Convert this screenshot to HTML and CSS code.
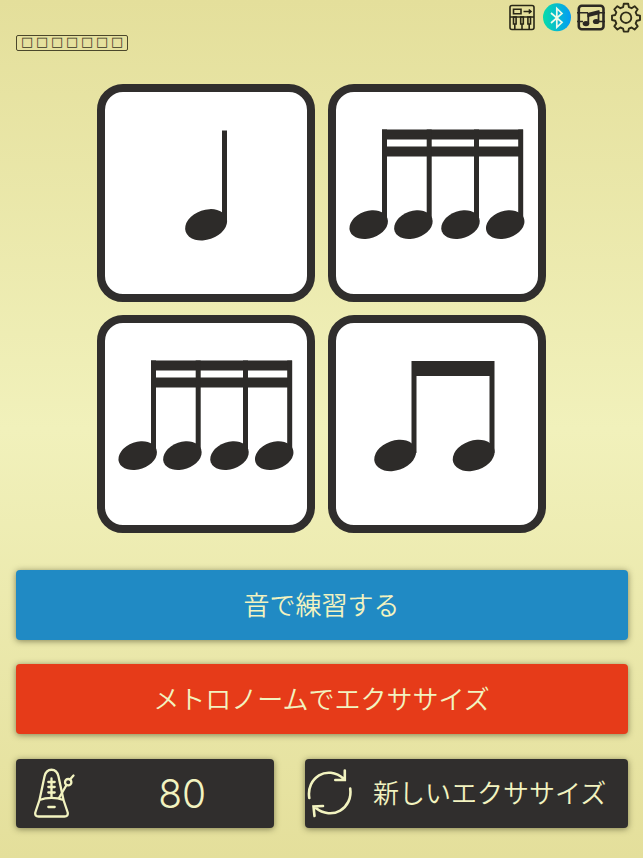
FILE: index.html
```html
<!DOCTYPE html>
<html lang="ja">
<head>
  <meta charset="utf-8">
  <title>リズム</title>
  <link rel="stylesheet" href="styles.css">
</head>
<body>
  <svg width="0" height="0" class="defs">
    <defs>
      <ellipse id="head" rx="19.8" ry="13.6" transform="rotate(-19)"/>
      <g id="sixteenths">
        <path d="M46 37.500h141v10H46zM46 54.500h141v10H46z"/>
        <path d="M46 37.500h5V130h-5zM90.700 37.500h5V130h-5zM138 37.500h5V130h-5zM182.200 37.500h5V130h-5z"/>
        <use href="#head" x="32.700" y="132.700"/>
        <use href="#head" x="77.400" y="132.700"/>
        <use href="#head" x="124.500" y="132.700"/>
        <use href="#head" x="169.200" y="132.700"/>
      </g>
    </defs>
  </svg>
  <header>
    <div class="badge">□□□□□□□</div>
    <nav>
      <svg class="icon" viewBox="0 0 28 28" fill="none" stroke="#292716" stroke-width="1.600">
        <rect x="2" y="2.500" width="24" height="24" rx="2"/>
        <path d="M2 14h24M5.500 6.200h7.500v4.600H5.500zM15.500 8.500H23M20.800 6.500l2.200 2-2.200 2M6.800 21v5M14 21v5M21.200 21v5"/>
        <path d="M5.500 14h2.600v7H5.500zM12.700 14h2.600v7h-2.600zM19.900 14h2.600v7h-2.600z"/>
      </svg>
      <svg class="icon" viewBox="0 0 28 28" fill="none">
        <linearGradient id="bt"><stop offset="0" stop-color="#08dca9"/><stop offset="1" stop-color="#049cf4"/></linearGradient>
        <circle cx="14" cy="14.300" r="14" fill="url(#bt)"/>
        <path d="M8 10l11 9.300-5.200 5V5.500l5.200 5L8 20" stroke="#eefbe8" stroke-width="1.700"/>
      </svg>
      <svg class="icon" viewBox="0 0 28 28" fill="none" stroke="#2b2823">
        <rect x="1.800" y="2.800" width="24.700" height="23.500" rx="3" stroke-width="2.600"/>
        <path d="M0 9.800h11M22 9.800h6M0 18.500h6M22 18.500h6" stroke-width="1.400"/>
        <path d="M11.300 20.500V10M21.500 18V8" stroke-width="1.800"/>
        <g fill="#2b2823" stroke="none">
          <path d="M10.400 10l12-3v4.200l-12 3z"/>
          <ellipse cx="9" cy="20.600" rx="3.300" ry="2.600"/>
          <ellipse cx="19.200" cy="18.500" rx="3.300" ry="2.600"/>
        </g>
      </svg>
      <svg class="icon" viewBox="0 0 28 28" fill="none" stroke="#302d19" stroke-width="1.900" stroke-linejoin="round">
        <path d="M11.800 .8h4.400l.7 3.300 2.700 1.100 3-2 3.100 3.100-2 3 1.100 2.700 3.200.6V17l-3.200.7-1.100 2.700 2 3-3.100 3.100-3-2-2.700 1.100-.7 3h-4.400l-.7-3-2.700-1.100-3 2-3.100-3.100 2-3L3.200 17.700 0 17v-4.400l3.200-.6 1.100-2.700-2-3 3.100-3.100 3 2 2.700-1.100z"/>
        <circle cx="14" cy="14.700" r="5.300"/>
      </svg>
    </nav>
  </header>

  <main>
    <div class="card">
      <svg viewBox="0 0 202 202">
        <path d="M117 38.500h5V130h-5z"/>
        <use href="#head" transform="translate(101.100 132.800) scale(1.090)"/>
      </svg>
    </div>
    <div class="card"><svg viewBox="0 0 202 202"><use href="#sixteenths"/></svg></div>
    <div class="card"><svg viewBox="0 0 202 202"><use href="#sixteenths"/></svg></div>
    <div class="card">
      <svg viewBox="0 0 202 202">
        <path d="M75.500 38H158.500v92h-5V53h-73v77h-5z"/>
        <use href="#head" transform="translate(59.200 132.500) scale(1.090)"/>
        <use href="#head" transform="translate(137.700 132.500) scale(1.090)"/>
      </svg>
    </div>
  </main>

  <footer>
    <button class="blue"><span>音で練習する</span></button>
    <button class="red"><span>メトロノームでエクササイズ</span></button>
    <div class="row">
      <button class="tempo">
        <svg width="44" height="50" viewBox="0 0 44 50" fill="none" stroke="#f2f3c0" stroke-width="2.300" stroke-linecap="round" stroke-linejoin="round">
          <path d="M5.500 32L10.500 8.500c2-9 12-9 14 0l5 23.500 4.200 12.500c.5 2.500-.7 4-3.200 4h-26c-2.500 0-3.700-1.500-3.200-4L5.500 32c7-2.800 17-2.800 24 0"/>
          <path d="M17.500 10.500V29M14.300 14h6.400M14.300 19h6.400M14.300 24.500h6.400M14.300 39h6.400"/>
          <path d="M25 30l7.500-13M36 11.500l3.500-4"/>
          <circle cx="34.200" cy="14.200" r="3.200"/>
        </svg>
        <span>80</span>
      </button>
      <button class="new">
        <svg width="46" height="50" viewBox="0 0 46 50" fill="none" stroke="#f2f3c0" stroke-width="2.600" stroke-linecap="round">
          <path d="M2.300 30C-1 10 20-4 37 11M37.800 2.500V12h-9.500"/>
          <path d="M43.200 20.500c3 19.500-18 33-35 19M7.500 48l-1-9.500 9.500-.5"/>
        </svg>
        <span>新しいエクササイズ</span>
      </button>
    </div>
  </footer>
</body>
</html>
```

FILE: styles.css
```css
* { box-sizing: border-box; }
body { margin: 0; height: 858px; overflow: hidden; font-family: "Noto Sans CJK JP", sans-serif; background: linear-gradient(#e4df9b, #f1f1bb 50%, #e4df9b); }
.defs { display: block; }

header { height: 84px; display: flex; justify-content: space-between; align-items: flex-start; padding-left: 16px; }
.badge { margin-top: 35px; width: 112px; height: 16px; border: 1px solid #4b472b; border-radius: 2px; color: #38351f; font: 13px/12px "DejaVu Sans", sans-serif; letter-spacing: 2.700px; padding-left: 4px; white-space: nowrap; overflow: hidden; }
nav { display: flex; gap: 6.500px; padding-top: 3px; margin-right: 3.500px; }
.icon { width: 28px; height: 28px; display: block; overflow: visible; }

main { display: grid; grid-template-columns: 218px 218px; justify-content: center; gap: 13px; }
.card { height: 218px; border: 8px solid #302e2d; border-radius: 26px; background: #fff; }
.card svg { display: block; width: 202px; height: 202px; fill: #2d2b29; }

footer { padding: 37px 15.500px 0; display: grid; gap: 24.500px; }
button { display: flex; align-items: center; justify-content: center; height: 69.800px; width: 100%; padding: 0; border: 0; border-radius: 4px; color: #f2f3c0; font: 350 26px "Noto Sans CJK JP DemiLight", "Noto Sans CJK JP", sans-serif; box-shadow: 0 1px 6px rgba(60, 60, 30, .6); }
button span { padding-bottom: 3px; }
.blue { background: #208ac4; }
.red { background: #e63b19; }
.row { display: grid; grid-template-columns: 258.500px 322.500px; gap: 31px; }
.row button { justify-content: flex-start; background: #302e2d; }
.tempo svg { margin-left: 18px; }
.tempo span { flex: 1; text-align: center; padding: 0 0 0 13px; font: 350 39px Inter, sans-serif; }
.new svg { margin-left: 2px; }
.new span { margin-left: 20px; }
```
